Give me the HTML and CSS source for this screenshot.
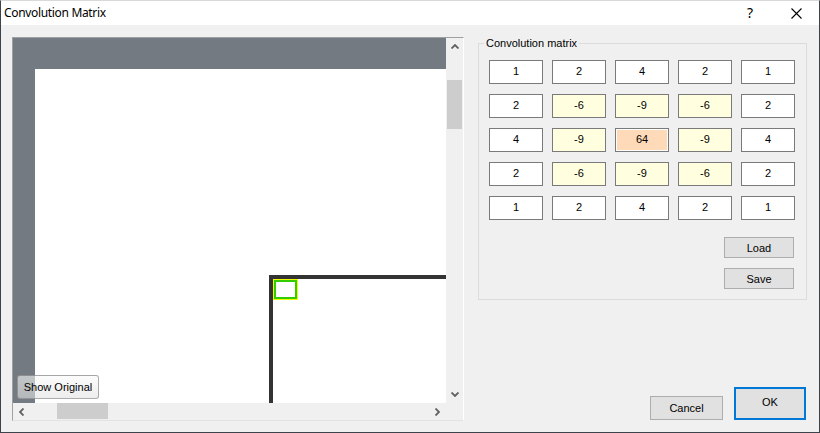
FILE: index.html
```html
<!DOCTYPE html>
<html>
<head>
<meta charset="utf-8">
<title>Convolution Matrix</title>
<link rel="stylesheet" href="styles.css">
</head>
<body>
<div class="window">
  <div class="titlebar">
    <span class="title">Convolution Matrix</span>
    <span class="cap-btn help">?</span>
    <span class="cap-btn close">
      <svg width="11" height="11" viewBox="0 0 11 11"><path d="M0.5 0.5 L10.5 10.5 M10.5 0.5 L0.5 10.5" stroke="#000" stroke-width="1.1" fill="none"/></svg>
    </span>
  </div>
  <div class="main">
    <div class="preview">
      <div class="preview-top">
        <div class="canvas">
          <div class="image">
            <div class="frame">
              <div class="marker"></div>
            </div>
          </div>
        </div>
        <div class="vscroll">
          <div class="sb-btn"><svg width="8" height="5" viewBox="0 0 8 5"><path d="M0.5 4.5 L4 1 L7.5 4.5" stroke="#606060" stroke-width="1.8" fill="none"/></svg></div>
          <div class="vtrack"><div class="vthumb"></div></div>
          <div class="sb-btn"><svg width="8" height="5" viewBox="0 0 8 5"><path d="M0.5 0.5 L4 4 L7.5 0.5" stroke="#606060" stroke-width="1.8" fill="none"/></svg></div>
        </div>
      </div>
      <div class="preview-bottom">
        <div class="hscroll">
          <div class="sb-btn"><svg width="5" height="8" viewBox="0 0 5 8"><path d="M4.5 0.5 L1 4 L4.5 7.5" stroke="#606060" stroke-width="1.8" fill="none"/></svg></div>
          <div class="htrack"><div class="hthumb"></div></div>
          <div class="sb-btn"><svg width="5" height="8" viewBox="0 0 5 8"><path d="M0.5 0.5 L4 4 L0.5 7.5" stroke="#606060" stroke-width="1.8" fill="none"/></svg></div>
        </div>
        <div class="corner"></div>
      </div>
      <button class="show-original">Show Original</button>
    </div>
    <div class="side">
      <fieldset class="group">
        <legend>Convolution matrix</legend>
        <div class="matrix">
          <div class="cell">1</div><div class="cell">2</div><div class="cell">4</div><div class="cell">2</div><div class="cell">1</div>
          <div class="cell">2</div><div class="cell inner">-6</div><div class="cell inner">-9</div><div class="cell inner">-6</div><div class="cell">2</div>
          <div class="cell">4</div><div class="cell inner">-9</div><div class="cell center">64</div><div class="cell inner">-9</div><div class="cell">4</div>
          <div class="cell">2</div><div class="cell inner">-6</div><div class="cell inner">-9</div><div class="cell inner">-6</div><div class="cell">2</div>
          <div class="cell">1</div><div class="cell">2</div><div class="cell">4</div><div class="cell">2</div><div class="cell">1</div>
        </div>
        <div class="file-buttons">
          <button class="btn small">Load</button>
          <button class="btn small">Save</button>
        </div>
      </fieldset>
      <div class="dialog-buttons">
        <button class="btn cancel">Cancel</button>
        <button class="btn ok">OK</button>
      </div>
    </div>
  </div>
</div>
</body>
</html>
```
FILE: styles.css
```css
* { box-sizing: border-box; }
html, body { margin: 0; padding: 0; }
body {
  font-family: "Liberation Sans", Arial, sans-serif;
  font-size: 11px;
  color: #000;
  background: #f0f0f0;
}
.window {
  width: 820px;
  height: 433px;
  border: 1px solid #3c434a;
  border-top-color: #d9d9d9;
  background: #f0f0f0;
  display: flex;
  flex-direction: column;
  overflow: hidden;
}
.titlebar {
  height: 24px;
  background: #fff;
  display: flex;
  align-items: center;
  flex: none;
}
.title {
  font-family: "Noto Sans", sans-serif;
  font-size: 12px;
  letter-spacing: -0.33px;
  padding-left: 3px;
  margin-right: auto;
  padding-bottom: 1px;
}
.cap-btn {
  width: 46px;
  height: 24px;
  display: flex;
  align-items: center;
  justify-content: center;
}
.help {
  font-family: "Noto Sans", sans-serif;
  font-size: 14px;
  padding-bottom: 1px;
}
.main {
  flex: 1;
  display: flex;
  padding: 12px 12px 11px 11px;
}
.preview {
  position: relative;
  width: 452px;
  height: 384px;
  border: 1px solid #a0a0a0;
  border-right-color: #fff;
  border-bottom-color: #e3e3e3;
  display: flex;
  flex-direction: column;
  flex: none;
}
.preview-top {
  display: flex;
  height: 365px;
}
.canvas {
  width: 433px;
  height: 365px;
  background: #737a82;
  padding: 31px 0 0 22px;
  overflow: hidden;
}
.image {
  width: 100%;
  height: 100%;
  background: #fff;
  padding: 206px 0 0 234px;
  overflow: hidden;
}
.frame {
  width: 300px;
  height: 300px;
  border: 4px solid #333;
}
.marker {
  width: 25px;
  height: 21px;
  box-shadow: inset 0 0 0 1px #f0ff00, inset 0 0 0 3px #33cc00;
}
.vscroll {
  width: 17px;
  display: flex;
  flex-direction: column;
  background: #f0f0f0;
}
.sb-btn {
  width: 17px;
  height: 17px;
  display: flex;
  align-items: center;
  justify-content: center;
  flex: none;
}
.vtrack { flex: 1; padding: 25px 1px 0 1px; }
.vthumb { height: 49px; background: #cdcdcd; }
.preview-bottom {
  display: flex;
  height: 17px;
}
.hscroll {
  width: 433px;
  display: flex;
  background: #f0f0f0;
}
.htrack { flex: 1; padding: 0 0 0 27px; }
.hthumb { width: 51px; height: 16px; background: #cdcdcd; }
.corner { width: 17px; background: #f0f0f0; }
.show-original {
  position: absolute;
  left: 4px;
  top: 337px;
  width: 82px;
  height: 24px;
  font-family: "Liberation Sans", Arial, sans-serif;
  font-size: 11px;
  color: #000;
  border: 1px solid rgba(110, 110, 110, 0.55);
  border-radius: 3px;
  background: linear-gradient(rgba(250, 250, 250, 0.6), rgba(225, 225, 225, 0.6));
  padding: 0;
}
.side {
  margin-left: 14px;
  margin-top: -1px;
  width: 329px;
  display: flex;
  flex-direction: column;
}
.group {
  margin: 0;
  border: 1px solid #dcdcdc;
  padding: 10px 11px 10px 10px;
  min-width: 0;
}
.group legend {
  font-size: 11px;
  line-height: 14px;
  padding: 0 2px;
  margin-left: -5px;
}
.matrix {
  display: grid;
  grid-template-columns: repeat(5, 54px);
  grid-auto-rows: 24px;
  column-gap: 9px;
  row-gap: 10px;
}
.cell {
  border: 1px solid #7a7a7a;
  background: #fff;
  display: flex;
  align-items: center;
  justify-content: center;
  padding-bottom: 3px;
  font-size: 11px;
}
.cell.inner { background: #ffffe0; }
.cell.center { background: #ffdab9; box-shadow: inset 0 0 0 1px #fff; }
.file-buttons {
  display: flex;
  flex-direction: column;
  align-items: flex-end;
  gap: 10px;
  margin-top: 17px;
  margin-right: 1px;
}
.btn {
  font-family: "Liberation Sans", Arial, sans-serif;
  font-size: 11px;
  color: #000;
  background: #e1e1e1;
  border: 1px solid #adadad;
  padding: 0;
  margin: 0;
}
.btn.small { width: 70px; height: 21px; }
.dialog-buttons {
  margin-top: auto;
  display: flex;
  justify-content: flex-end;
  align-items: flex-end;
  gap: 11px;
  padding-right: 1px;
  margin-bottom: 1px;
}
.btn.cancel { width: 73px; height: 24px; }
.btn.ok { width: 72px; height: 33px; border: 2px solid #0078d7; padding-bottom: 3px; }
```
